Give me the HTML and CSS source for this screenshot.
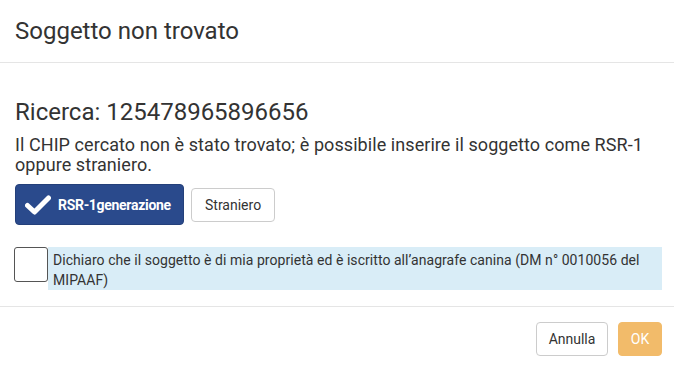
FILE: index.html
```html
<!DOCTYPE html>
<html lang="it">
<head>
<meta charset="utf-8">
<title>Soggetto non trovato</title>
<link rel="stylesheet" href="styles.css">
</head>
<body>
<div class="modal">
  <div class="modal-header">
    <h4 class="modal-title">Soggetto non trovato</h4>
  </div>
  <div class="modal-body">
    <h3 class="search">Ricerca: 125478965896656</h3>
    <p class="msg">Il CHIP cercato non è stato trovato; è possibile inserire il soggetto come RSR-1 oppure straniero.</p>
    <div class="choices">
      <button class="btn btn-primary">
        <svg class="check" width="26" height="20" viewBox="0 0 26 20"><path d="M2.5 10.5 L9.5 17 L23.5 3" fill="none" stroke="#fff" stroke-width="5" stroke-linecap="round" stroke-linejoin="round"/></svg>
        <span class="btn-label">RSR-1generazione</span>
      </button>
      <button class="btn btn-default">Straniero</button>
    </div>
    <div class="declare">
      <span class="box"></span>
      <div class="declare-text">Dichiaro che il soggetto è di mia proprietà ed è iscritto all’anagrafe canina (DM n° 0010056 del MIPAAF)</div>
    </div>
  </div>
  <div class="modal-footer">
    <button class="btn btn-default btn-cancel">Annulla</button>
    <button class="btn btn-warning">OK</button>
  </div>
</div>
</body>
</html>
```
FILE: styles.css
```css
* { box-sizing: border-box; }
html, body { margin: 0; padding: 0; background: #fff; }
body {
  font-family: Roboto, "Noto Sans", sans-serif;
  color: #333;
  width: 674px;
  height: 371px;
  overflow: hidden;
}
.modal { width: 674px; }
.modal-header {
  height: 63px;
  border-bottom: 1px solid #e5e5e5;
  padding: 17px 15px 0;
}
.modal-title {
  margin: 0;
  font-weight: 400;
  font-size: 24px;
  line-height: 28px;
  color: #333;
}
.modal-body {
  padding: 35px 12px 16px 15px;
}
.search {
  margin: 0;
  font-weight: 400;
  font-size: 24px;
  line-height: 28px;
}
.msg {
  margin: 9px 0 0;
  font-size: 18px;
  line-height: 20px;
  letter-spacing: 0.07px;
}
.choices {
  display: flex;
  align-items: center;
  gap: 7px;
  margin-top: 9px;
}
.btn {
  font-family: Roboto, "Noto Sans", sans-serif;
  border-radius: 4px;
  cursor: pointer;
}
.btn-primary {
  display: flex;
  align-items: center;
  background: #2a4a8c;
  border: 1px solid #24407a;
  color: #fff;
  height: 41px;
  width: 169px;
  padding: 0 0 0 9px;
}
.check { margin-right: 7px; }
.btn-label {
  font-weight: 700;
  font-size: 14px;
  letter-spacing: -0.3px;
}
.btn-default {
  background: #fff;
  border: 1px solid #ccc;
  color: #333;
  font-size: 14px;
  height: 34px;
  padding: 0 13px;
}
.declare {
  display: flex;
  margin-top: 22px;
}
.box {
  flex: none;
  width: 34px;
  height: 35px;
  border: 1px solid #555;
  border-radius: 3px;
  margin-left: -1px;
}
.declare-text {
  flex: 1;
  background: #d9edf7;
  font-size: 14px;
  line-height: 20px;
  padding: 3px 5px 0 5px;
  height: 43px;
  letter-spacing: 0.05px;
}
.modal-footer {
  border-top: 1px solid #e5e5e5;
  display: flex;
  justify-content: flex-end;
  gap: 10px;
  padding: 15px 12px 0 15px;
}
.btn-cancel { width: 72px; padding: 0; }
.btn-warning {
  background: #f2bb6a;
  border: 1px solid #f2bb6a;
  color: #fff;
  font-size: 14px;
  height: 34px;
  width: 44px;
  padding: 0;
}
```
